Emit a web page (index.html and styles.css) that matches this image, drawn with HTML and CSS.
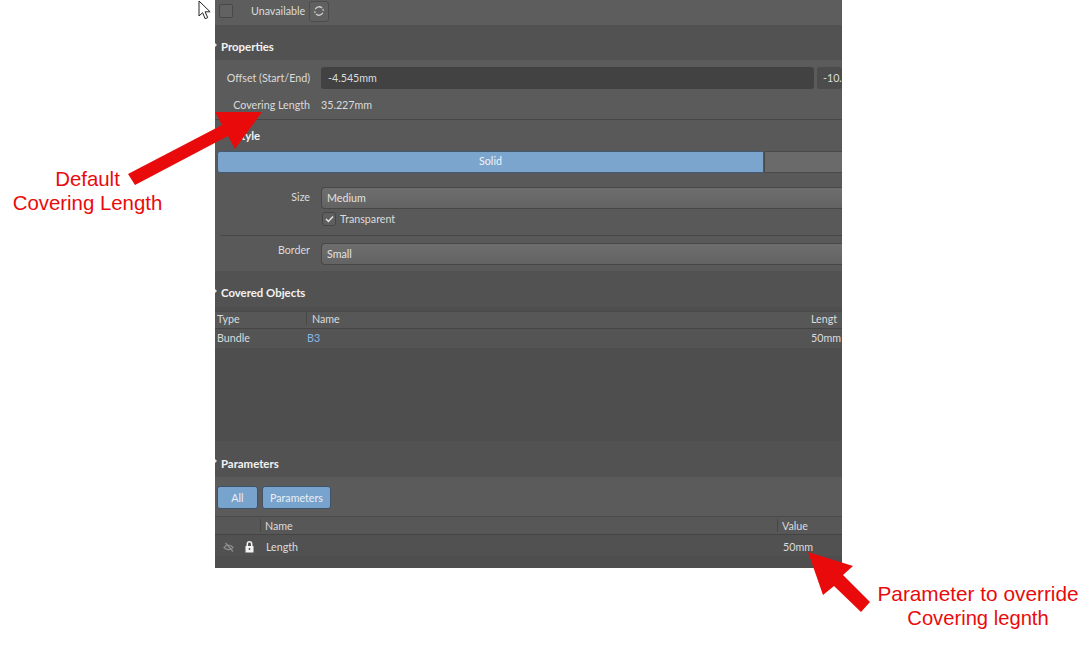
FILE: index.html
```html
<!DOCTYPE html>
<html lang="en">
<head>
<meta charset="utf-8">
<title>Covering properties</title>
<link rel="stylesheet" href="styles.css">
</head>
<body>
<main class="panel">
  <div class="top-row">
    <span class="check"></span>
    <span class="top-label">Unavailable</span>
    <span class="icon-btn">
      <svg width="12" height="12" viewBox="0 0 12 12" fill="none" stroke="#cfcfcf" stroke-width="1.3"><path d="M2.2 4.2A4.2 4.2 0 0 1 9 3"/><path d="M9.8 7.8A4.2 4.2 0 0 1 3 9"/><path d="M1.7 6.2A4.3 4.3 0 0 0 2.2 8"/><path d="M10.3 5.8A4.3 4.3 0 0 0 9.8 4"/></svg>
    </span>
  </div>

  <h2 class="section-head sec-properties"><i class="tri"></i>Properties</h2>
  <section class="props">
    <div class="prop-row offset-row">
      <span class="label">Offset (Start/End)</span>
      <span class="input input-main">-4.545mm</span>
      <span class="input input-end">-10.</span>
    </div>
    <div class="prop-row length-row">
      <span class="label">Covering Length</span>
      <span class="value">35.227mm</span>
    </div>
  </section>

  <section class="style">
    <h2 class="style-head">Style</h2>
    <div class="segments">
      <span class="seg seg-on">Solid</span>
      <span class="seg seg-off"></span>
    </div>
    <div class="prop-row size-row">
      <span class="label label-up">Size</span>
      <span class="select">Medium</span>
    </div>
    <div class="transparent-row">
      <span class="check check-on">
        <svg width="9" height="8" viewBox="0 0 9 8" fill="none" stroke="#e4e4e4" stroke-width="1.5"><path d="M1 4l2.4 2.4L8 1.4"/></svg>
      </span>
      <span class="transparent-label">Transparent</span>
    </div>
    <div class="rule"></div>
    <div class="prop-row border-row">
      <span class="label label-high">Border</span>
      <span class="select">Small</span>
    </div>
  </section>

  <h2 class="section-head sec-covered"><i class="tri"></i>Covered Objects</h2>
  <section class="covered">
    <div class="thead covered-head">
      <span class="col-type">Type</span>
      <span class="col-name">Name</span>
      <span class="col-len">Lengt</span>
    </div>
    <div class="trow covered-row">
      <span class="col-type">Bundle</span>
      <span class="col-name link">B3</span>
      <span class="col-len">50mm</span>
    </div>
  </section>

  <h2 class="section-head sec-params"><i class="tri"></i>Parameters</h2>
  <div class="filters">
    <span class="pill pill-all">All</span>
    <span class="pill pill-params">Parameters</span>
  </div>
  <section class="params">
    <div class="thead params-head">
      <span class="col-icons"></span>
      <span class="col-pname">Name</span>
      <span class="col-value">Value</span>
    </div>
    <div class="trow params-row">
      <span class="col-icons">
        <svg width="12" height="12" viewBox="0 0 12 12" fill="none" stroke="#8f8f8f" stroke-width="1.2"><path d="M1 6.500C3 3.600 7 3 10 6.500 8 9.300 4 9.600 1 6.500z"/><path d="M2.500 2l7.500 8.500"/></svg>
        <svg class="lock" width="9" height="12" viewBox="0 0 9 12"><path fill="none" stroke="#f4f4f4" stroke-width="1.500" d="M2.300 5V3a2.200 2.200 0 0 1 4.400 0V5"/><path fill="#f4f4f4" fill-rule="evenodd" d="M.5 5h8v6.500h-8zM3.800 7v2h1.400V7z"/></svg>
      </span>
      <span class="col-pname">Length</span>
      <span class="col-value">50mm</span>
    </div>
  </section>
</main>

<svg class="cursor" width="14" height="20" viewBox="0 0 14 20"><path d="M1 1v15l3.600-3.300 2.500 6 2.600-1.100-2.600-5.800h5z" fill="#fff" stroke="#222" stroke-width="1"/></svg>

<svg class="arrows" width="1088" height="650" viewBox="0 0 1088 650">
  <polygon fill="#e90b0b" points="262,112 215,112 222,125 128,174 135,185 228,136 235,149"/>
  <polygon fill="#e90b0b" points="808,552 853,566 843,575 870,602 861,612 834,586 823,595"/>
</svg>

<p class="note note-left">Default<br>Covering Length</p>
<p class="note note-right">Parameter to override<br><span class="note-line">Covering legnth</span></p>
</body>
</html>
```
FILE: styles.css
```css
* { box-sizing: border-box; }
html, body { margin: 0; padding: 0; background: #fff; }
body { width: 1088px; height: 650px; overflow: hidden; position: relative; font-family: "Lato", "Open Sans", sans-serif; font-size: 10.7px; color: #dcdcdc; }

.panel { width: 627px; height: 568px; margin-left: 215px; background: #5b5b5b; overflow: hidden; display: flex; flex-direction: column; white-space: nowrap; }

.top-row { height: 25px; flex: none; display: flex; align-items: center; padding-left: 4px; background: #5d5d5d; padding-bottom: 3px; }
.top-label { margin-left: 18px; width: 58px; padding-bottom: 2px; }
.check { width: 14px; height: 14px; border: 1px solid #484848; border-radius: 2px; background: #626262; display: flex; align-items: center; justify-content: center; flex: none; }
.icon-btn { width: 20px; height: 21px; border: 1px solid #4d4d4d; border-radius: 3px; background: #606060; display: flex; align-items: center; justify-content: center; }

.section-head { margin: 0; flex: none; display: flex; align-items: center; font-size: 11.4px; font-weight: 700; color: #f2f2f2; background: #525252; padding-left: 6px; position: relative; }
.tri { position: absolute; left: -1px; top: 50%; margin-top: -1px; border-left: 3px solid #e8e8e8; border-top: 3px solid transparent; border-bottom: 3px solid transparent; }
.sec-properties { height: 35px; padding-top: 7px; }
.sec-covered { height: 36px; padding-top: 6px; }
.sec-params { height: 36px; padding-top: 8px; }

.props { height: 60px; flex: none; padding-top: 7px; border-bottom: 1px solid #474747; }
.prop-row { display: flex; align-items: center; }
.label { width: 95px; text-align: right; flex: none; position: relative; top: -1px; }
.label-up { top: -2px; }
.label-high { top: -5px; }
.offset-row { height: 22px; }
.input { height: 22px; padding-bottom: 2px; border-radius: 3px; display: flex; align-items: center; background: #424242; padding-left: 7px; margin-left: 11px; }
.input-main { width: 493px; flex: none; }
.input-end { margin-left: 3px; flex: 1; background: #4c4c4c; padding-left: 6px; }
.length-row { height: 20px; margin-top: 6px; }
.value { margin-left: 11px; position: relative; top: -1px; }

.style { height: 151px; flex: none; background: #595959; }
.style-head { margin: 0; height: 31px; padding: 0 0 0 20px; font-size: 11.4px; font-weight: 700; color: #f2f2f2; display: flex; align-items: center; }
.segments { height: 22px; display: flex; margin-left: 2px; }
.seg { display: flex; align-items: center; justify-content: center; height: 22px; }
.seg-on { width: 547px; background: #7ba5cd; border: 1px solid #435a72; border-radius: 3px 0 0 3px; color: #eef3f8; padding-bottom: 3px; }
.seg-off { flex: 1; background: #6a6a6a; border: 1px solid #4a4a4a; border-right: 0; }
.select { flex: 1; height: 22px; margin-left: 11px; border: 1px solid #474747; border-right: 0; border-radius: 4px 0 0 4px; background: linear-gradient(#6e6e6e, #636363); display: flex; align-items: center; padding: 0 0 2px 5px; color: #e2e2e2; }
.size-row { margin-top: 14px; }
.transparent-row { display: flex; align-items: center; height: 16px; margin: 2px 0 0 107px; }
.transparent-label { padding-bottom: 2px; }
.check-on { background: #5f5f5f; border-color: #454545; border-radius: 3px; margin-right: 4px; }
.rule { height: 1px; background: #474747; margin: 8px 0 7px 5px; }

.covered { flex: none; height: 134px; background: #4e4e4e; padding-top: 4px; }
.thead, .trow { display: flex; align-items: center; }
.thead { background: #575757; border-bottom: 1px solid #444; border-top: 1px solid #4a4a4a; }
.covered-head { height: 18px; padding-bottom: 3px; }
.covered-row { height: 19px; background: #545454; padding-bottom: 2px; }
.col-type { width: 91px; padding-left: 2px; flex: none; }
.col-name { width: 505px; padding-left: 5px; flex: none; }
.covered-head .col-name { border-left: 1px solid #474747; }
.col-len { padding-left: 0; }
.link { color: #86b4e6; padding-left: 1px; margin-left: 0; }

.filters { height: 39px; flex: none; display: flex; align-items: flex-start; gap: 4px; padding: 9px 0 0 2px; background: #5b5b5b; }
.pill { height: 23px; display: flex; align-items: center; justify-content: center; background: #78a3cc; border: 1px solid #3f5266; border-radius: 3px; color: #e9eff5; padding-bottom: 1px; }
.pill-all { width: 41px; }
.pill-params { width: 69px; }

.params { flex: 1; background: #4e4e4e; }
.params-head { height: 19px; }
.params-row { height: 21px; background: #515151; padding-top: 2px; }
.col-icons { width: 45px; flex: none; display: flex; align-items: center; padding-left: 8px; gap: 10px; }
.col-pname { width: 517px; flex: none; }
.params-head .col-pname { padding-left: 4px; border-left: 1px solid #474747; }
.params-row .col-pname { padding-left: 6px; }
.params-head .col-value { border-left: 1px solid #474747; padding-left: 4px; }
.params-row .col-value { padding-left: 6px; }

.cursor { position: absolute; left: 198px; top: 0; }
.arrows { position: absolute; left: 0; top: 0; pointer-events: none; }

.note { position: absolute; margin: 0; text-align: center; font-family: "Liberation Sans", Arial, sans-serif; line-height: 24px; color: #e90b0b; }
.note-left { left: 0; top: 167px; width: 175px; font-size: 20.4px; }
.note-right { left: 868px; top: 582px; width: 220px; font-size: 20.8px; }
.note-line { font-size: 20.2px; }
```
